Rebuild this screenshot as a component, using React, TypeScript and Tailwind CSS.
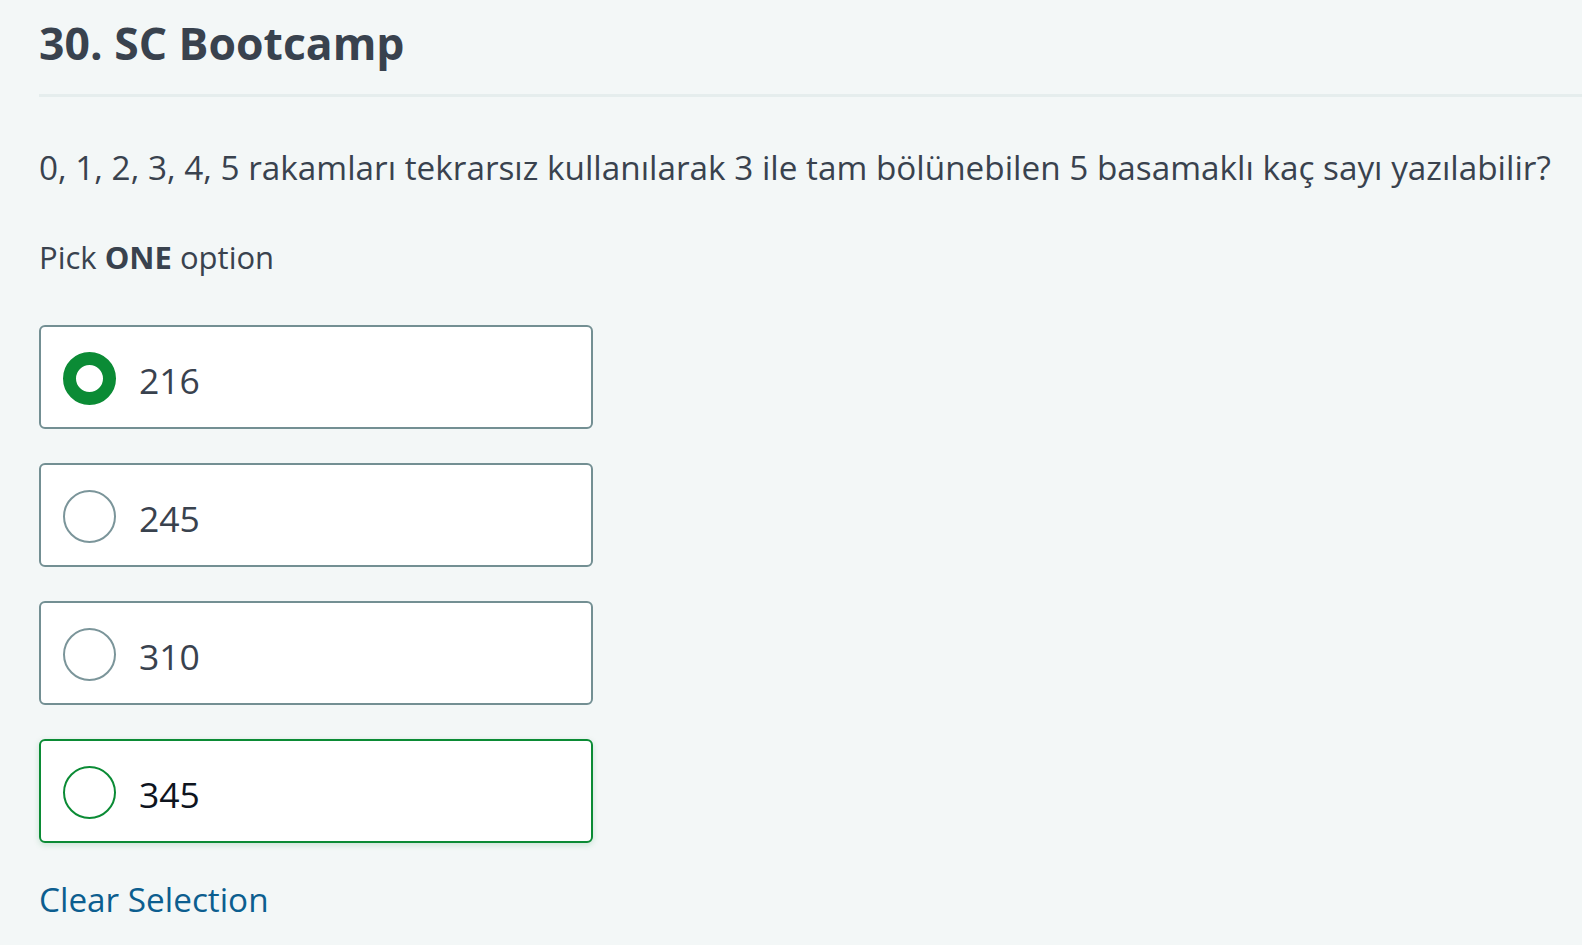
import React from "react";

const options = [
  { label: "216", state: "checked" },
  { label: "245", state: "idle" },
  { label: "310", state: "idle" },
  { label: "345", state: "hover" },
];

function Radio({ state }: { state: string }) {
  if (state === "checked") {
    return <span className="block h-[53px] w-[53px] shrink-0 rounded-full border-[13px] border-[#0b8b35] bg-white" />;
  }
  if (state === "hover") {
    return <span className="block h-[53px] w-[53px] shrink-0 rounded-full border-2 border-[#0b8b35] bg-white" />;
  }
  return <span className="block h-[53px] w-[53px] shrink-0 rounded-full border-2 border-[#7b959a] bg-white" />;
}

export default function App() {
  return (
    <div
      className="min-h-[945px] w-full bg-[#f3f7f7] pl-[39px] text-[#39424e]"
      style={{ fontFamily: '"Open Sans", "Noto Sans", sans-serif' }}
    >
      <h1 className="pt-[15px] text-[44.5px] font-bold leading-[56px] text-[#39424e]">30. SC Bootcamp</h1>
      <div className="mt-[23px] h-[3px] w-full bg-[#e5eded]" />
      <p className="mt-[50px] text-[33.3px] leading-[40px]">
        0, 1, 2, 3, 4, 5 rakamları tekrarsız kullanılarak 3 ile tam bölünebilen 5 basamaklı kaç sayı yazılabilir?
      </p>
      <p className="mt-[50px] text-[31px] leading-[40px]">
        Pick <span className="font-bold">ONE</span> option
      </p>
      <div className="mt-[48px] flex flex-col gap-[34px]">
        {options.map((o) => (
          <div
            key={o.label}
            className={
              o.state === "hover"
                ? "flex h-[104px] w-[554px] items-center gap-[23px] rounded-[6px] border-2 border-[#0b8b35] bg-white pl-[22px] pt-[3px] shadow-[0_2px_6px_rgba(11,139,53,0.18)]"
                : "flex h-[104px] w-[554px] items-center gap-[23px] rounded-[6px] border-2 border-[#738f93] bg-white pl-[22px] pt-[3px]"
            }
          >
            <Radio state={o.state} />
            <span className={o.state === "hover" ? "mt-[2px] text-[35.5px] leading-[40px] text-[#0e141e]" : "mt-[2px] text-[35.5px] leading-[40px] text-[#39424e]"}>
              {o.label}
            </span>
          </div>
        ))}
      </div>
      <div className="mt-[36px] text-[33.3px] leading-[40px] text-[#0c5e8f]">Clear Selection</div>
    </div>
  );
}
